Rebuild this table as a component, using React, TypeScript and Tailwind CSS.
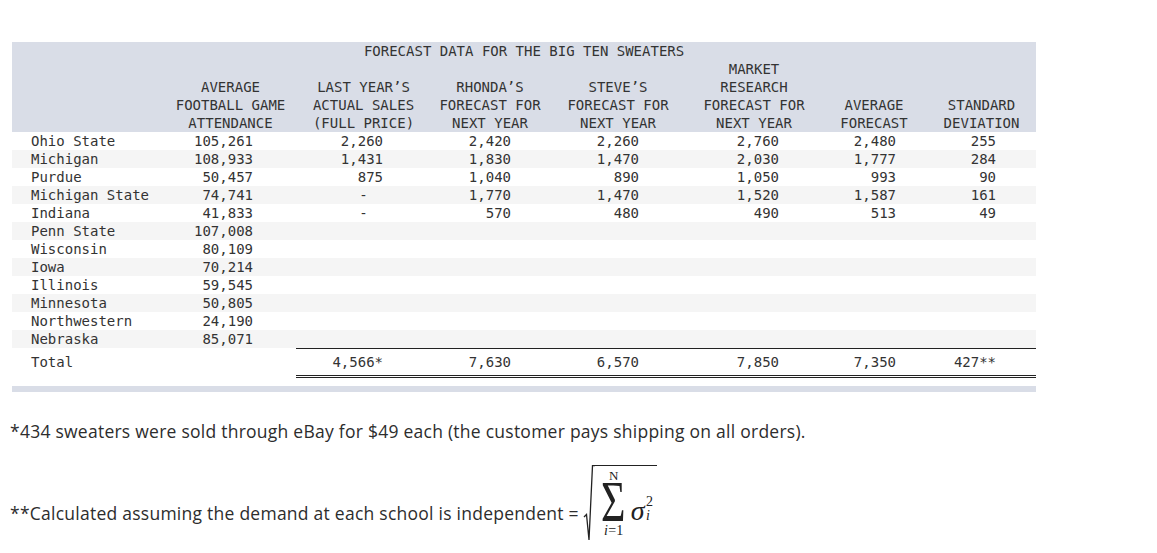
import React from 'react';

const mono = { fontFamily: '"DejaVu Sans Mono", "Liberation Mono", monospace' };

const rows: string[][] = [
  ['Ohio State', '105,261', '2,260', '2,420', '2,260', '2,760', '2,480', '255'],
  ['Michigan', '108,933', '1,431', '1,830', '1,470', '2,030', '1,777', '284'],
  ['Purdue', '50,457', '875', '1,040', '890', '1,050', '993', '90'],
  ['Michigan State', '74,741', '-', '1,770', '1,470', '1,520', '1,587', '161'],
  ['Indiana', '41,833', '-', '570', '480', '490', '513', '49'],
  ['Penn State', '107,008', '', '', '', '', '', ''],
  ['Wisconsin', '80,109', '', '', '', '', '', ''],
  ['Iowa', '70,214', '', '', '', '', '', ''],
  ['Illinois', '59,545', '', '', '', '', '', ''],
  ['Minnesota', '50,805', '', '', '', '', '', ''],
  ['Northwestern', '24,190', '', '', '', '', '', ''],
  ['Nebraska', '85,071', '', '', '', '', '', ''],
];

const totals = ['4,566*', '7,630', '6,570', '7,850', '7,350', '427**'];

// right padding so the figures line up like the source table
const pads = ['', 'pr-[43px]', 'pr-[48px]', 'pr-[38px]', 'pr-[48px]', 'pr-[42px]', 'pr-[31px]', 'pr-[40px]'];

const heads: string[][] = [
  [],
  ['AVERAGE', 'FOOTBALL GAME', 'ATTENDANCE'],
  ['LAST YEAR’S', 'ACTUAL SALES', '(FULL PRICE)'],
  ['RHONDA’S', 'FORECAST FOR', 'NEXT YEAR'],
  ['STEVE’S', 'FORECAST FOR', 'NEXT YEAR'],
  ['MARKET', 'RESEARCH', 'FORECAST FOR', 'NEXT YEAR'],
  ['AVERAGE', 'FORECAST'],
  ['STANDARD', 'DEVIATION'],
];

const widths = [153, 131, 135, 118, 138, 134, 106, 109];

const Formula: React.FC = () => (
  <div className="flex h-[76px] shrink-0" style={{ fontFamily: '"Liberation Serif", "DejaVu Serif", serif' }}>
    <svg width="12" height="76" viewBox="0 0 12 76" className="block shrink-0">
      <path d="M1 52 L3.5 49.5 L6 75 L9.5 0.7 L12 0.7" fill="none" stroke="#222" strokeWidth="1.3" />
    </svg>
    <div className="h-[76px] border-t-[1.3px] border-[#222] flex items-start pl-[6px] pr-[4px] text-[#222]">
      <div className="flex flex-col items-center w-[26px]">
        <span className="text-[13px] leading-[14px] mt-[3px]">N</span>
        <span className="text-[56px] leading-[38px] scale-x-[0.75] origin-center">Σ</span>
        <span className="text-[14px] leading-[16px] mt-[2px] italic">
          i<span className="not-italic">=1</span>
        </span>
      </div>
      <div className="flex items-center mt-[31px] ml-[4px]">
        <span className="text-[28px] italic leading-[28px]">σ</span>
        <span className="flex flex-col text-[14px] leading-[14px] -mt-[4px] ml-[1px]">
          <span>2</span>
          <span className="italic">i</span>
        </span>
      </div>
    </div>
  </div>
);

const App: React.FC = () => {
  return (
    <div className="w-[1157px] h-[553px] bg-white pt-[42px] pl-[12px] text-[#333]">
      <table className="table-fixed w-[1024px] text-[14px] leading-[18px]" style={mono}>
        <colgroup>
          {widths.map((w, i) => (
            <col key={i} style={{ width: w }} />
          ))}
        </colgroup>
        <thead className="bg-[#d9dde7]">
          <tr>
            <th colSpan={8} className="font-normal text-center p-0">FORECAST DATA FOR THE BIG TEN SWEATERS</th>
          </tr>
          <tr>
            {heads.map((lines, i) => (
              <th key={i} className="font-normal text-center align-bottom p-0 whitespace-nowrap">
                {lines.map((l, j) => (
                  <div key={j}>{l}</div>
                ))}
              </th>
            ))}
          </tr>
        </thead>
        <tbody>
          {rows.map((r, ri) => (
            <tr key={ri} className={ri % 2 === 1 ? 'bg-[#f5f5f5]' : 'bg-white'}>
              {r.map((c, ci) => (
                <td
                  key={ci}
                  className={
                    ci === 0
                      ? 'pl-[19px] text-left p-0 whitespace-nowrap'
                      : c === '-'
                      ? 'text-center p-0'
                      : `text-right p-0 ${pads[ci]}`
                  }
                >
                  {c}
                </td>
              ))}
            </tr>
          ))}
          <tr className="h-[28px]">
            <td className="pl-[19px] text-left p-0">Total</td>
            <td className="p-0"></td>
            {totals.map((t, i) => (
              <td
                key={i}
                className={`text-right p-0 border-double border-t border-b-[3px] border-[#222] ${pads[i + 2]}`}
              >
                {t}
              </td>
            ))}
          </tr>
        </tbody>
      </table>
      <div className="w-[1024px] h-[6px] bg-[#d9dde7] mt-[8px]"></div>

      <div
        className="-ml-[2px] mt-[27px] text-[17.5px] leading-[24px] text-[#2d2d2d] tracking-[0.25px]"
        style={{ fontFamily: '"Open Sans", Lato, sans-serif' }}
      >
        <p>*434 sweaters were sold through eBay for $49 each (the customer pays shipping on all orders).</p>
        <div className="flex items-end mt-[22px]">
          <p className="pb-[16px] mr-[4px] whitespace-nowrap">**Calculated assuming the demand at each school is independent =</p>
          <Formula />
        </div>
      </div>
    </div>
  );
};

export default App;
